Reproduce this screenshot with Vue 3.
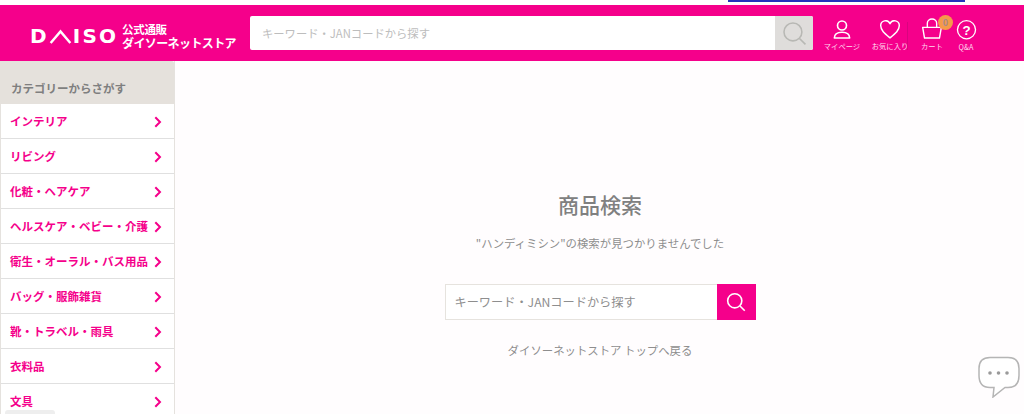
<script setup>
const categories = [
  'インテリア',
  'リビング',
  '化粧・ヘアケア',
  'ヘルスケア・ベビー・介護',
  '衛生・オーラル・バス用品',
  'バッグ・服飾雑貨',
  '靴・トラベル・雨具',
  '衣料品',
  '文具'
]
</script>

<template>
  <div class="page">
    <div class="top-strip"><span class="blue-line"></span></div>

    <header class="header">
      <div class="logo">
        <span class="logo-mark">
          D<svg class="logo-a" viewBox="0 0 24 16" width="23" height="15"><path d="M1.500 15 12 2.500 22.500 15" fill="none" stroke="#fff" stroke-width="2.600" /></svg>ISO
        </span>
        <span class="logo-text">
          <span class="logo-small">公式通販</span>
          <span>ダイソーネットストア</span>
        </span>
      </div>

      <div class="head-search">
        <span class="head-placeholder">キーワード・JANコードから探す</span>
        <span class="head-search-btn">
          <svg viewBox="0 0 24 24" width="25" height="25"><circle cx="10.500" cy="10.500" r="8.600" fill="none" stroke="#b8b8b4" stroke-width="1.500" /><path d="M16.800 16.800 22.500 22.500" stroke="#b8b8b4" stroke-width="1.600" /></svg>
        </span>
      </div>

      <nav class="head-nav">
        <div class="nav-item mypage">
          <svg viewBox="2 1 20 21" width="18" height="19"><circle cx="12" cy="7" r="5" fill="none" stroke="#fff" stroke-width="1.800" /><path d="M3.500 21c0-4.500 3-6.500 8.500-6.500s8.500 2 8.500 6.500z" fill="none" stroke="#fff" stroke-width="1.800" stroke-linejoin="round" /></svg>
          <span>マイページ</span>
        </div>
        <div class="nav-item fav">
          <svg viewBox="1 2 22 20" width="20" height="19"><path d="M12 21.200C6 16.200 1.800 12.800 1.800 8a5.300 5.300 0 0 1 10.200-2.300A5.300 5.300 0 0 1 22.200 8c0 4.800-4.200 8.200-10.200 13.200z" fill="none" stroke="#fff" stroke-width="1.600" stroke-linejoin="round" /></svg>
          <span>お気に入り</span>
          <i class="divider"></i>
        </div>
        <div class="nav-item cart">
          <svg class="cart-icon" viewBox="1 0.500 22 22.500" width="22" height="21"><path d="M2 10.500h20l-2 11.500H4z" fill="none" stroke="#fff" stroke-width="1.500" stroke-linejoin="round" /><path d="M7 10.500V6a5 4.500 0 0 1 10 0v4.500" fill="none" stroke="#fff" stroke-width="1.500" /></svg>
          <span>カート</span>
          <b class="badge">0</b>
        </div>
        <div class="nav-item qa">
          <svg viewBox="1 1 22 22" width="21" height="19.500"><circle cx="12" cy="12" r="10.200" fill="none" stroke="#fff" stroke-width="1.500" /><text x="12" y="17.500" class="qa-mark">?</text></svg>
          <span>Q&amp;A</span>
        </div>
      </nav>
    </header>

    <div class="body">
      <aside class="side">
        <h2 class="side-title">カテゴリーからさがす</h2>
        <ul class="side-list">
          <li v-for="name in categories" :key="name" class="side-row">
            <span>{{ name }}</span>
            <svg viewBox="0 0 8 12" width="8" height="12"><path d="M1.300 1.200 6 6l-4.700 4.800" fill="none" stroke="#f5008b" stroke-width="2" /></svg>
          </li>
        </ul>
      </aside>

      <main class="main">
        <h1 class="title">商品検索</h1>
        <p class="message">"ハンディミシン"の検索が見つかりませんでした</p>
        <div class="search">
          <span class="search-input">キーワード・JANコードから探す</span>
          <span class="search-btn">
            <svg viewBox="0 0 24 24" width="20" height="20"><circle cx="10.500" cy="10.500" r="8.500" fill="none" stroke="#fff" stroke-width="1.900" /><path d="M16.800 16.800 22.500 22.500" stroke="#fff" stroke-width="2" /></svg>
          </span>
        </div>
        <a class="back">ダイソーネットストア トップへ戻る</a>
      </main>
    </div>

    <svg class="chat" viewBox="0 0 42 42" width="42" height="42">
      <path d="M12 1.500h18c7 0 11 4 11 11v7c0 8-4 12-11 12h-3l-12 9.500 1-9.500h-4C5 31.500 1 27.500 1 19.500v-7C1 5.500 5 1.500 12 1.500z" fill="#fff" stroke="#b5b5b5" stroke-width="1.500" />
      <circle cx="12" cy="17" r="1.800" fill="#9a9a9a" />
      <circle cx="20.500" cy="17" r="1.800" fill="#9a9a9a" />
      <circle cx="29" cy="17" r="1.800" fill="#9a9a9a" />
    </svg>
    <span class="corner-tab"></span>
  </div>
</template>

<style>
html, body {
  margin: 0;
  overflow: hidden;
}
</style>

<style scoped>
.page {
  position: relative;
  width: 1024px;
  height: 414px;
  overflow: hidden;
  background: #fffdfe;
  font-family: "Noto Sans CJK JP", "Noto Sans", sans-serif;
}
.top-strip {
  height: 5px;
  background: #fff;
  display: flex;
  justify-content: flex-end;
  padding-right: 59px;
}
.blue-line {
  width: 237px;
  height: 2px;
  background: #2233bb;
}
.header {
  height: 56px;
  background: #f5008b;
  display: flex;
  align-items: flex-start;
  color: #fff;
}
.logo {
  width: 250px;
  flex: none;
  padding: 13px 0 0 30px;
  box-sizing: border-box;
  display: flex;
  align-items: center;
  height: 49px;
}
.logo-mark {
  width: 92px;
  flex: none;
  display: flex;
  align-items: center;
  font-family: "DejaVu Sans", sans-serif;
  font-weight: 700;
  font-size: 20px;
  letter-spacing: 2.200px;
  line-height: 1;
}
.logo-a {
  margin-right: 1px;
}
.logo-text {
  display: flex;
  flex-direction: column;
  font-size: 12px;
  font-weight: 700;
  line-height: 14px;
  white-space: nowrap;
  letter-spacing: -0.600px;
}
.logo-small {
  font-size: 11.500px;
  letter-spacing: -0.300px;
}
.head-search {
  margin-top: 11px;
  width: 563px;
  height: 34px;
  background: #fff;
  border-radius: 2px;
  display: flex;
  overflow: hidden;
}
.head-placeholder {
  flex: 1;
  padding-left: 12px;
  font-size: 11.300px;
  line-height: 34px;
  color: #bdbdbd;
}
.head-search-btn {
  width: 38px;
  background: #dfdddb;
  display: flex;
  align-items: center;
  justify-content: center;
}
.head-nav {
  display: flex;
  margin-left: 10px;
  padding-top: 15px;
}
.nav-item {
  position: relative;
  display: flex;
  flex-direction: column;
  align-items: center;
  font-size: 7.300px;
  line-height: 9px;
  gap: 3px;
  white-space: nowrap;
  color: #ffd9ee;
}
.mypage { width: 38px; }
.fav { width: 58px; }
.cart { width: 26px; }
.qa { width: 42px; }
.divider {
  position: absolute;
  left: 46px;
  top: 2px;
  width: 1px;
  height: 28px;
  background: #d9047f;
}
.cart-icon {
  margin-top: -2px;
}
.qa-mark {
  fill: #fff;
  font-size: 15px;
  font-weight: 700;
  text-anchor: middle;
  font-family: "Liberation Sans", sans-serif;
}
.badge {
  position: absolute;
  top: -5px;
  left: 19px;
  width: 15px;
  height: 15px;
  border-radius: 50%;
  background: #f59a4a;
  color: #a88;
  font-size: 9px;
  line-height: 15px;
  text-align: center;
}
.body {
  display: flex;
}
.side {
  width: 175px;
  flex: none;
  box-sizing: border-box;
  border-right: 1px solid #e5e2de;
  border-left: 1px solid #e5e2de;
  background: #fff;
}
.side-title {
  margin: 0 0 0 -1px;
  height: 43px;
  padding-left: 11px;
  background: #e5e1dc;
  color: #7f7f7f;
  font-size: 11.500px;
  font-weight: 700;
  line-height: 54px;
  border-top-right-radius: 2px;
}
.side-list {
  margin: 0;
  padding: 0;
  list-style: none;
}
.side-row {
  height: 35px;
  box-sizing: border-box;
  border-bottom: 1px solid #e0e0e0;
  padding: 0 12px 0 9px;
  display: flex;
  justify-content: space-between;
  align-items: center;
  color: #f5008b;
  font-size: 11.500px;
  font-weight: 700;
  white-space: nowrap;
}
.side-row svg {
  margin-top: 2px;
  flex: none;
}
.main {
  flex: 1;
  display: flex;
  flex-direction: column;
  align-items: center;
  padding: 127px 0 0 1px;
}
.title {
  margin: 0;
  font-size: 21px;
  line-height: 32px;
  font-weight: 500;
  color: #808080;
}
.message {
  margin: 14px 0 0;
  font-size: 11.400px;
  line-height: 18px;
  color: #8e8e8e;
}
.search {
  margin-top: 32px;
  width: 311px;
  height: 36px;
  display: flex;
}
.search-input {
  flex: 1;
  border: 1px solid #e6e3de;
  border-right: none;
  background: #fff;
  padding-left: 9px;
  font-size: 12.200px;
  line-height: 34px;
  color: #8e8e8e;
}
.search-btn {
  width: 39px;
  background: #f5008b;
  display: flex;
  align-items: center;
  justify-content: center;
}
.back {
  margin-top: 21px;
  font-size: 11.400px;
  line-height: 18px;
  color: #8e8e8e;
}
.chat {
  position: absolute;
  left: 978px;
  top: 356px;
}
.corner-tab {
  position: absolute;
  left: 5px;
  bottom: 0;
  width: 50px;
  height: 4px;
  background: #eeeeee;
  border-radius: 3px 3px 0 0;
}
</style>
